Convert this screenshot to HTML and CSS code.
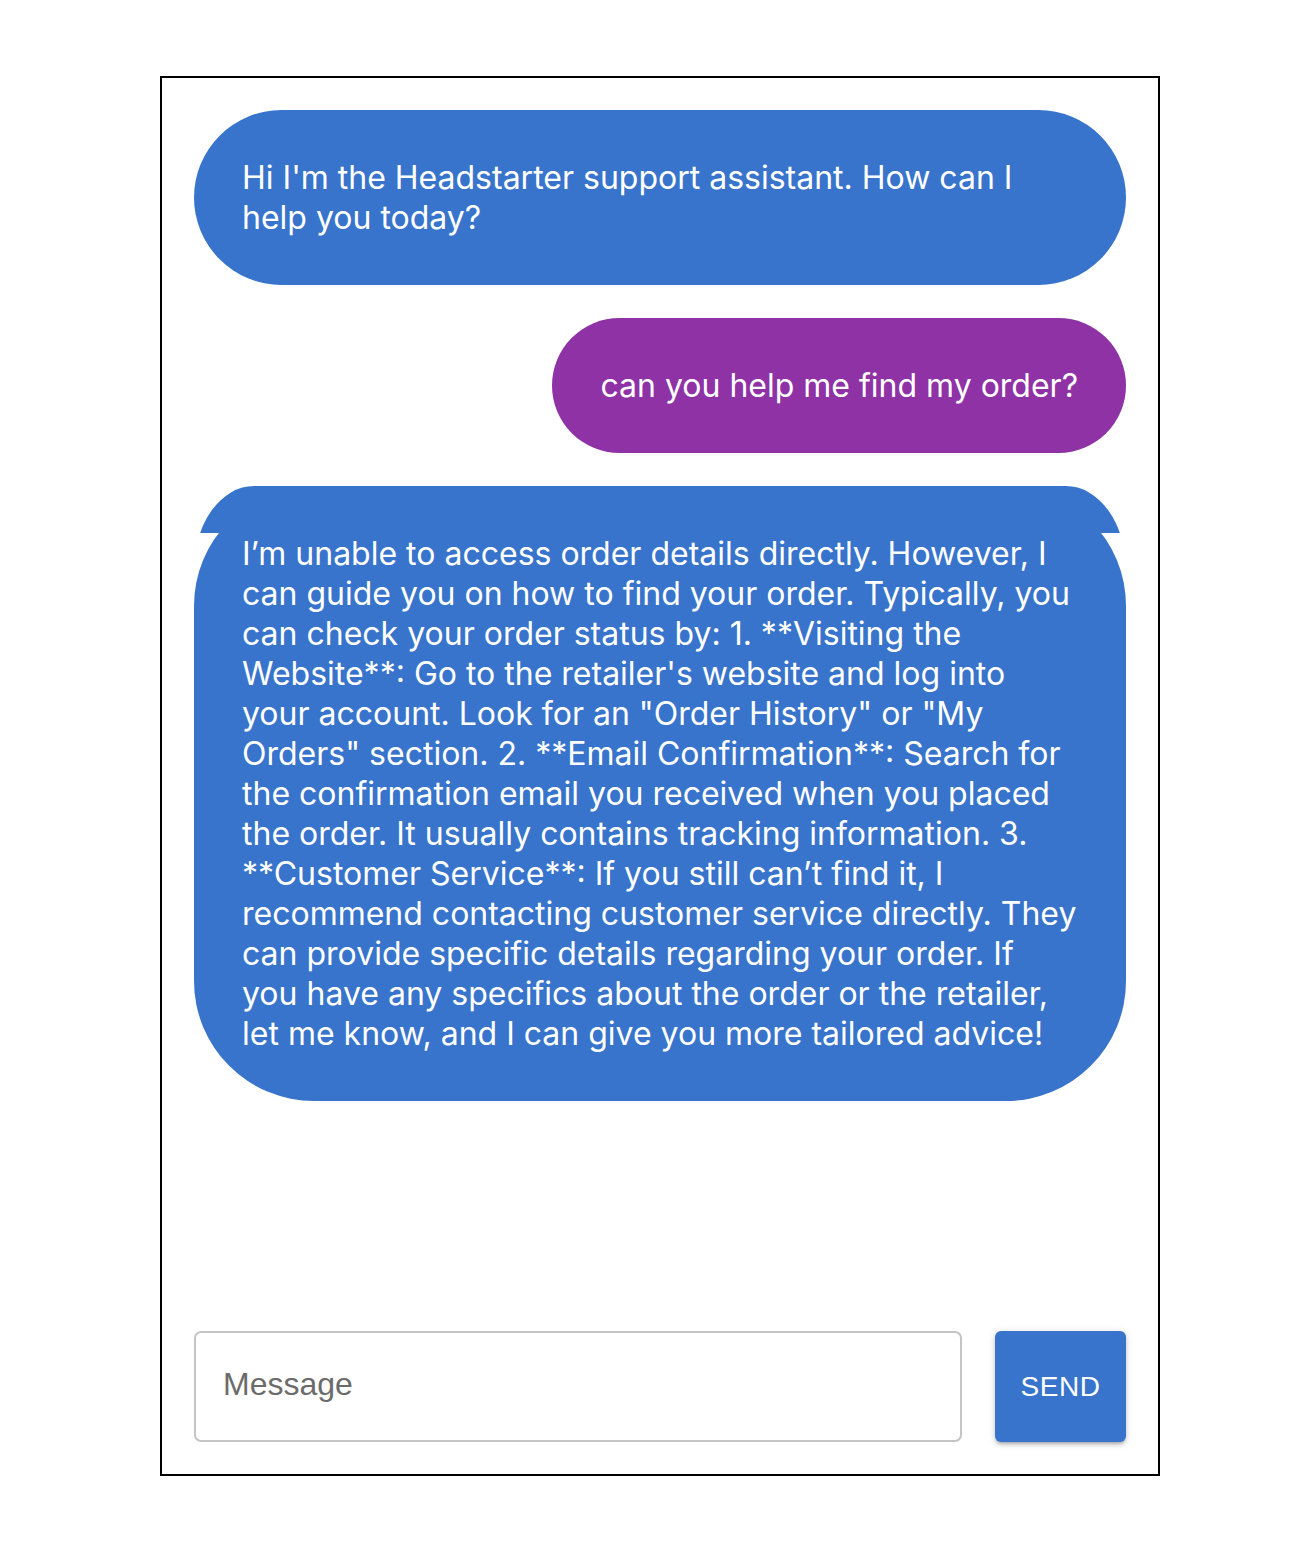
FILE: index.html
```html
<!DOCTYPE html>
<html>
<head>
<meta charset="utf-8">
<link rel="stylesheet" href="styles.css">
</head>
<body>
<div class="chat">
  <div class="messages">
    <div class="msg bot">Hi I'm the Headstarter support assistant. How can I help you today?</div>
    <div class="msg user">can you help me find my order?</div>
    <div class="msg bot glitch">I’m unable to access order details directly. However, I can guide you on how to find your order. Typically, you can check your order status by: 1. **Visiting the Website**: Go to the retailer's website and log into your account. Look for an "Order History" or "My Orders" section. 2. **Email Confirmation**: Search for the confirmation email you received when you placed the order. It usually contains tracking information. 3. **Customer Service**: If you still can’t find it, I recommend contacting customer service directly. They can provide specific details regarding your order. If you have any specifics about the order or the retailer, let me know, and I can give you more tailored advice!</div>
  </div>
  <div class="composer">
    <div class="input"><span class="placeholder">Message</span></div>
    <button class="send">SEND</button>
  </div>
</div>
</body>
</html>
```
FILE: styles.css
```css
html, body {
  margin: 0;
  padding: 0;
  background: #fff;
}
body {
  padding: 76px 0 0 160px;
}
.chat {
  box-sizing: border-box;
  width: 1000px;
  height: 1400px;
  border: 2px solid #000;
  padding: 32px;
  display: flex;
  flex-direction: column;
}
.messages {
  flex: 1;
  display: flex;
  flex-direction: column;
  gap: 33px;
}
.msg {
  position: relative;
  font-family: Inter, "Noto Sans", sans-serif;
  font-size: 32px;
  line-height: 40px;
  color: #fff;
  padding: 48px 48px 47px;
  border-radius: 120px;
}
.bot {
  background: #3874cb;
  align-self: stretch;
}
.user {
  background: #8e32a6;
  align-self: flex-end;
}
.glitch::before {
  content: "";
  position: absolute;
  top: 0;
  left: 0;
  right: 0;
  height: 200px;
  background: #3874cb;
  border-radius: 60px 60px 0 0 / 84px 84px 0 0;
  clip-path: inset(0 0 153px 0);
}
.composer {
  display: flex;
  gap: 33px;
  height: 111px;
}
.input {
  flex: 1;
  box-sizing: border-box;
  border: 2px solid #c4c4c4;
  border-radius: 7px;
  display: flex;
  align-items: center;
  padding-left: 27px;
}
.placeholder {
  font-family: "Liberation Sans", Arial, sans-serif;
  font-size: 32px;
  color: #6b6b6b;
  padding-bottom: 4px;
}
.send {
  width: 131px;
  border: none;
  border-radius: 6px;
  background: #3874cb;
  color: #fff;
  font-family: "Liberation Sans", Arial, sans-serif;
  font-size: 28px;
  letter-spacing: 0.5px;
  box-shadow: 0 3px 3px -2px rgba(0,0,0,0.2), 0 3px 4px 0 rgba(0,0,0,0.14), 0 1px 8px 0 rgba(0,0,0,0.12);
  padding: 0;
}
```
